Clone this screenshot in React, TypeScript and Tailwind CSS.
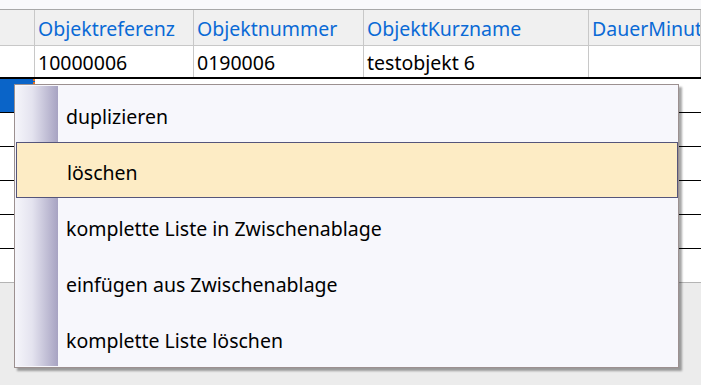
import React from "react";

const cols = [
  { w: "w-[35px]", title: "" },
  { w: "w-[159px]", title: "Objektreferenz" },
  { w: "w-[170px]", title: "Objektnummer" },
  { w: "w-[225px]", title: "ObjektKurzname" },
  { w: "flex-1", title: "DauerMinuten" },
];

const row1 = ["", "10000006", "0190006", "testobjekt 6", ""];

const items = [
  "duplizieren",
  "löschen",
  "komplette Liste in Zwischenablage",
  "einfügen aus Zwischenablage",
  "komplette Liste löschen",
];

export default function App() {
  return (
    <div
      className="relative w-[701px] h-[385px] overflow-hidden bg-[#ececec] text-[19.5px] leading-none"
      style={{ fontFamily: '"Noto Sans", "Open Sans", sans-serif' }}
    >
      <div className="h-[9px] bg-[#f9f9fb]" />
      <div className="border-t border-[#a8a8a8]" />
      {/* header */}
      <div className="flex h-[36px] bg-[#f0f0f0] border-b border-[#c8c8c8]">
        {cols.map((c, i) => (
          <div
            key={i}
            className={`${c.w} shrink-0 overflow-hidden whitespace-nowrap border-r border-[#c8c8c8] pl-[3px] pt-[3px] flex items-center text-[#0a6ad6]`}
          >
            {c.title}
          </div>
        ))}
      </div>
      {/* row 1 */}
      <div className="flex h-[33px] bg-white border-b-2 border-black">
        {row1.map((t, i) => (
          <div
            key={i}
            className={`${cols[i].w} shrink-0 overflow-hidden whitespace-nowrap border-r border-[#c8c8c8] pl-[3px] pt-[3px] flex items-center text-black`}
          >
            {t}
          </div>
        ))}
      </div>
      {/* other rows */}
      {[0, 1, 2, 3, 4, 5].map((r) => (
        <div
          key={r}
          className={`flex h-[34px] bg-white ${r < 5 ? "border-b border-black" : "border-b border-[#b4b4b4]"}`}
        >
          <div
            className={`w-[35px] shrink-0 ${r === 0 ? "bg-[#0a64c8] border-r-2 border-dotted border-[#e07020]" : "border-r border-[#c8c8c8]"}`}
          />
          <div className="flex-1" />
        </div>
      ))}

      {/* context menu */}
      <div className="absolute left-[14px] top-[84px] w-[665px] h-[284px] border border-[#9c9090] bg-[#f7f7fc] shadow-[3px_3px_2px_rgba(0,0,0,0.35)] flex">
        <div className="absolute left-0 top-[1px] bottom-[1px] w-[43px] bg-[linear-gradient(to_right,#f6f6fb,#e4e3ef_40%,#a7a3c2)]" />
        <div className="relative flex-1 flex flex-col py-[1px] pl-[1px]">
          {items.map((t, i) => (
            <div
              key={i}
              className={`h-[56px] shrink-0 flex items-center pl-[50px] pt-[5px] text-black whitespace-nowrap ${
                i === 1 ? "bg-[#fdecc5] border border-[#55557a] pl-[49px]" : ""
              }`}
            >
              {t}
            </div>
          ))}
        </div>
      </div>
    </div>
  );
}
